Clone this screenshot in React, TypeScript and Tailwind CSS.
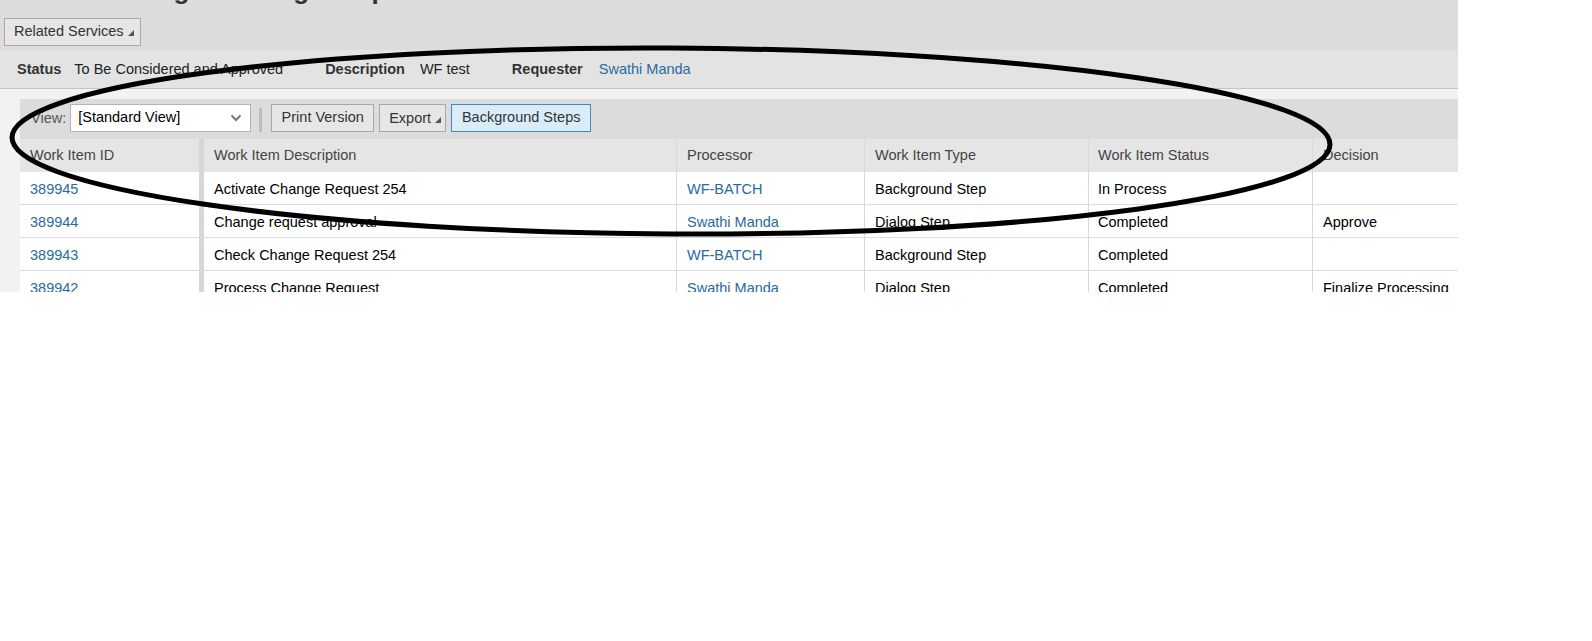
import React from "react";

type Row = {
  id: string;
  desc: string;
  processor: string;
  type: string;
  status: string;
  decision: string;
};

const rows: Row[] = [
  { id: "389945", desc: "Activate Change Request 254", processor: "WF-BATCH", type: "Background Step", status: "In Process", decision: "" },
  { id: "389944", desc: "Change request approval", processor: "Swathi Manda", type: "Dialog Step", status: "Completed", decision: "Approve" },
  { id: "389943", desc: "Check Change Request 254", processor: "WF-BATCH", type: "Background Step", status: "Completed", decision: "" },
  { id: "389942", desc: "Process Change Request", processor: "Swathi Manda", type: "Dialog Step", status: "Completed", decision: "Finalize Processing" },
];

function Corner() {
  return (
    <svg width="6" height="6" viewBox="0 0 6 6" className="ml-[4px] mt-[9px] shrink-0">
      <polygon points="6,0 6,6 0,6" fill="#555" />
    </svg>
  );
}

function Cells({ r, head }: { r?: Row; head?: boolean }) {
  const link = "text-[#2a6aa0]";
  const txt = head ? "text-[#444]" : "text-black";
  const pad = head ? "" : "pt-[3px]";
  return (
    <>
      <div className={`w-[184px] shrink-0 border-r-[5px] border-[#d7d7d7] pl-[10px] flex items-center ${pad} ${head ? txt : link}`}>
        {head ? "Work Item ID" : r!.id}
      </div>
      <div className={`w-[472px] shrink-0 pl-[10px] flex items-center ${pad} ${txt}`}>
        {head ? "Work Item Description" : r!.desc}
      </div>
      <div className={`w-[188px] shrink-0 border-l border-[#d9d9d9] pl-[10px] flex items-center ${pad} ${head ? txt : link}`}>
        {head ? "Processor" : r!.processor}
      </div>
      <div className={`w-[224px] shrink-0 border-l border-[#d9d9d9] pl-[10px] flex items-center ${pad} ${txt}`}>
        {head ? "Work Item Type" : r!.type}
      </div>
      <div className={`w-[224px] shrink-0 border-l border-[#d9d9d9] pl-[9px] flex items-center ${pad} ${txt}`}>
        {head ? "Work Item Status" : r!.status}
      </div>
      <div className={`flex-1 border-l border-[#d9d9d9] pl-[10px] flex items-center whitespace-nowrap ${pad} ${txt}`}>
        {head ? "Decision" : r!.decision}
      </div>
    </>
  );
}

export default function App() {
  return (
    <div className="min-h-screen bg-white font-['Liberation_Sans',Arial,sans-serif] text-[14.5px]">
      <div className="relative w-[1458px] h-[292px] overflow-hidden bg-[#f2f2f2]">
        {/* page header */}
        <div className="h-[50px] bg-[#dcdcdc] px-[4px]">
          <div className="h-[5px] overflow-hidden">
            <div className="-mt-[23px] ml-[14px] text-[26px] leading-[26px] font-bold text-[#333] whitespace-nowrap">
              Workflow Log of Change Steps
            </div>
          </div>
          <button className="mt-[13px] h-[28px] w-[137px] flex items-start pt-[2px] pl-[9px] border border-[#a8a8a8] bg-[#e6e6e6] text-[#333]">
            Related Services
            <Corner />
          </button>
        </div>

        {/* status band */}
        <div className="h-[39px] bg-[#e3e3e3] border-b border-[#c4c4c4] flex items-center pl-[17px] pt-[2px] text-[#222]">
          <span className="font-bold text-[#333]">Status</span>
          <span className="ml-[13px]">To Be Considered and Approved</span>
          <span className="ml-[42px] font-bold text-[#333]">Description</span>
          <span className="ml-[15px]">WF test</span>
          <span className="ml-[42px] font-bold text-[#333]">Requester</span>
          <span className="ml-[16px] text-[#2a6aa0]">Swathi Manda</span>
        </div>

        {/* table */}
        <div className="pl-[20px] pt-[10px]">
          <div className="bg-white">
            <div className="h-[40px] bg-[#dcdcdc] flex items-start pt-[5px] pl-[11px] text-[#333]">
              <span className="mt-[4px] text-[#555]">View:</span>
              <div className="ml-[4px] w-[181px] h-[28px] bg-white border border-[#b4b4b4] flex items-center justify-between pl-[7px] pr-[8px] text-black">
                <span>[Standard View]</span>
                <svg width="12" height="8" viewBox="0 0 12 8">
                  <path d="M1.5 1.5 L6 6 L10.5 1.5" fill="none" stroke="#777" strokeWidth="2" />
                </svg>
              </div>
              <div className="ml-[8px] mt-[4px] w-[3px] h-[24px] bg-[#bdbdbd]" />
              <button className="ml-[9px] h-[28px] w-[103px] border border-[#a8a8a8] bg-[#e6e6e6]">Print Version</button>
              <button className="ml-[5px] h-[28px] w-[67px] border border-[#a8a8a8] bg-[#e6e6e6] flex items-start pt-[3px] pl-[9px]">
                Export
                <Corner />
              </button>
              <button className="ml-[5px] h-[28px] w-[140px] border border-[#3d8cc4] bg-[#d9edf9]">Background Steps</button>
            </div>
            <div className="h-[33px] bg-[#e5e5e5] flex">
              <Cells head />
            </div>
            {rows.map((r) => (
              <div key={r.id} className="h-[33px] flex border-b border-[#dcdcdc]">
                <Cells r={r} />
              </div>
            ))}
          </div>
        </div>

        {/* hand-drawn annotation */}
        <svg className="absolute inset-0 pointer-events-none" width="1458" height="292">
          <ellipse cx="671" cy="141" rx="659" ry="93" fill="none" stroke="#000" strokeWidth="5" transform="rotate(0.3 671 141)" />
        </svg>
      </div>
    </div>
  );
}
